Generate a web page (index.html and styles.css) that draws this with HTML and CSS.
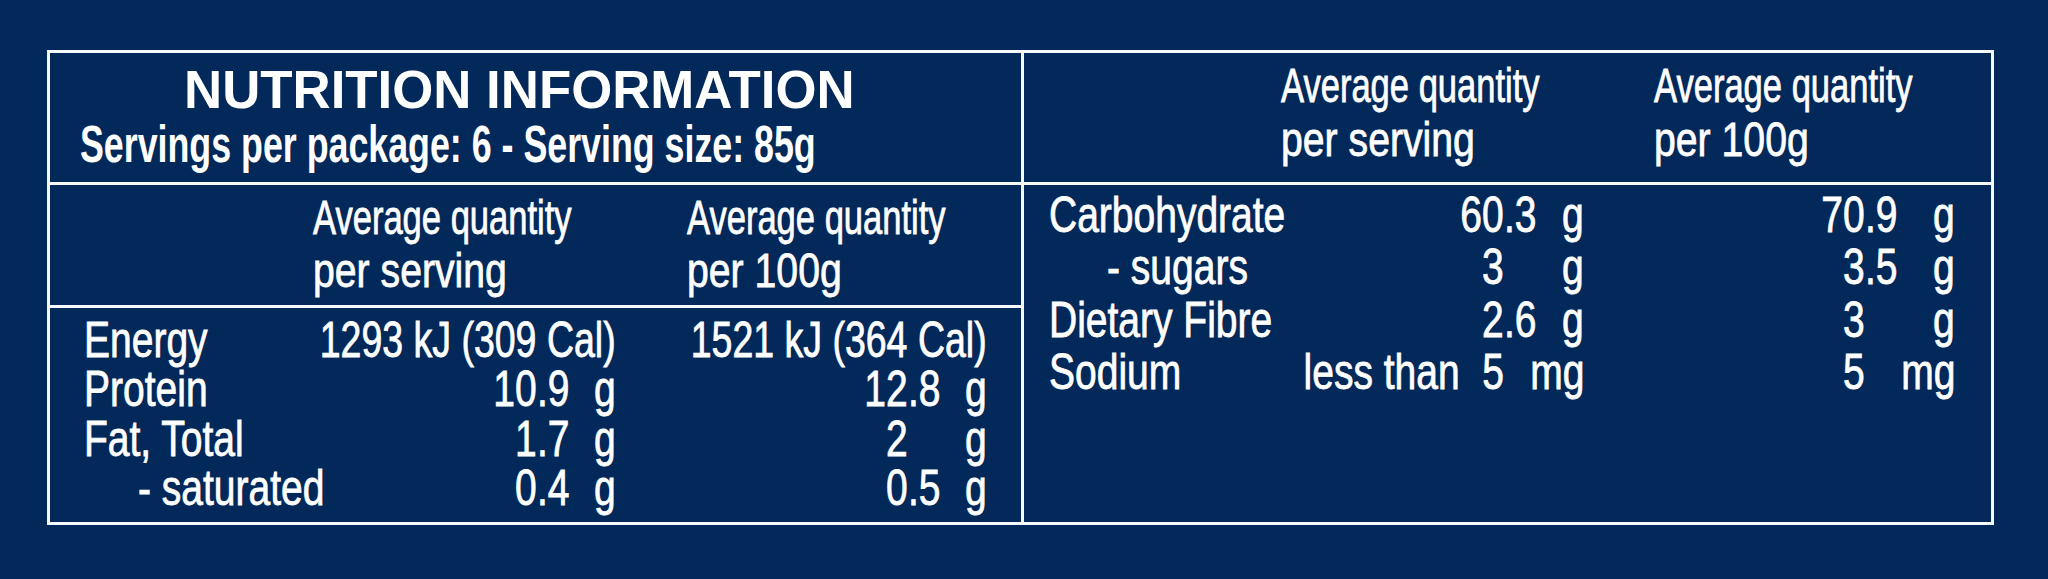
FILE: index.html
```html
<!DOCTYPE html>
<html lang="en">
<head>
<meta charset="utf-8">
<title>Nutrition Information</title>
<link rel="stylesheet" href="styles.css">
</head>
<body>
<div class="panel">
  <section class="half half-left">
    <header class="title">
      <h1 class="heading">NUTRITION INFORMATION</h1>
      <p class="servings"><span class="sx sv">Servings per package: 6 - Serving size: 85g</span></p>
    </header>
    <div class="colhead colhead-left">
      <div class="ch">
        <div><span class="sx aq">Average quantity</span></div>
        <div><span class="sx ps">per serving</span></div>
      </div>
      <div class="ch">
        <div><span class="sx aq">Average quantity</span></div>
        <div><span class="sx ps">per 100g</span></div>
      </div>
    </div>
    <div class="rows rows-left">
      <div class="row row-l">
        <div class="lab"><span class="sx">Energy</span></div>
        <div class="end ev1"><span class="sx ev">1293 kJ (309 Cal)</span></div>
        <div class="end ev2"><span class="sx ev">1521 kJ (364 Cal)</span></div>
      </div>
      <div class="row row-l">
        <div class="lab"><span class="sx">Protein</span></div>
        <div class="end"><span class="sx">10</span></div><div class="frac"><span class="sx">.9</span></div><div class="end"><span class="sx">g</span></div>
        <div class="end"><span class="sx">12</span></div><div class="frac"><span class="sx">.8</span></div><div class="end"><span class="sx">g</span></div>
      </div>
      <div class="row row-l">
        <div class="lab"><span class="sx">Fat, Total</span></div>
        <div class="end"><span class="sx">1</span></div><div class="frac"><span class="sx">.7</span></div><div class="end"><span class="sx">g</span></div>
        <div class="end"><span class="sx">2</span></div><div class="frac"></div><div class="end"><span class="sx">g</span></div>
      </div>
      <div class="row row-l">
        <div class="lab sub-l"><span class="sx">- saturated</span></div>
        <div class="end"><span class="sx">0</span></div><div class="frac"><span class="sx">.4</span></div><div class="end"><span class="sx">g</span></div>
        <div class="end"><span class="sx">0</span></div><div class="frac"><span class="sx">.5</span></div><div class="end"><span class="sx">g</span></div>
      </div>
    </div>
  </section>
  <section class="half half-right">
    <div class="colhead colhead-right">
      <div class="ch">
        <div><span class="sx aq">Average quantity</span></div>
        <div><span class="sx ps">per serving</span></div>
      </div>
      <div class="ch">
        <div><span class="sx aq">Average quantity</span></div>
        <div><span class="sx ps">per 100g</span></div>
      </div>
    </div>
    <div class="rows rows-right">
      <div class="row row-r">
        <div class="lab"><span class="sx">Carbohydrate</span></div>
        <div class="end"><span class="sx">60</span></div><div class="frac"><span class="sx">.3</span></div><div class="end"><span class="sx">g</span></div>
        <div class="end"><span class="sx">70</span></div><div class="frac"><span class="sx">.9</span></div><div class="end"><span class="sx">g</span></div>
      </div>
      <div class="row row-r">
        <div class="lab sub-r"><span class="sx">- sugars</span></div>
        <div class="end"><span class="sx">3</span></div><div class="frac"></div><div class="end"><span class="sx">g</span></div>
        <div class="end"><span class="sx">3</span></div><div class="frac"><span class="sx">.5</span></div><div class="end"><span class="sx">g</span></div>
      </div>
      <div class="row row-r">
        <div class="lab"><span class="sx">Dietary Fibre</span></div>
        <div class="end"><span class="sx">2</span></div><div class="frac"><span class="sx">.6</span></div><div class="end"><span class="sx">g</span></div>
        <div class="end"><span class="sx">3</span></div><div class="frac"></div><div class="end"><span class="sx">g</span></div>
      </div>
      <div class="row row-r">
        <div class="lab"><span class="sx">Sodium</span></div>
        <div class="end"><span class="sx"><span class="lt">less than</span>5</span></div><div class="frac"></div><div class="end"><span class="sx">mg</span></div>
        <div class="end"><span class="sx">5</span></div><div class="frac"></div><div class="end"><span class="sx">mg</span></div>
      </div>
    </div>
  </section>
</div>
</body>
</html>
```
FILE: styles.css
```css
html, body {
  margin: 0;
  padding: 0;
  background: #03295a;
}
body {
  width: 2048px;
  height: 579px;
  overflow: hidden;
  color: #ffffff;
  font-family: "Liberation Sans", Arial, sans-serif;
  font-size: 50px;
}
.panel {
  margin: 50px 0 0 47px;
  width: 1941px;
  height: 469px;
  border: 3px solid #f7f8fa;
  display: grid;
  grid-template-columns: 971px 967px;
  column-gap: 3px;
  background: #f7f8fa;
}
.half {
  display: flex;
  flex-direction: column;
  min-width: 0;
  background: #03295a;
}
.sx {
  display: inline-block;
  white-space: nowrap;
  transform: scaleX(0.78);
  transform-origin: 0 50%;
  -webkit-text-stroke: 0.8px #ffffff;
}
.end {
  display: flex;
  justify-content: flex-end;
  white-space: nowrap;
}
.end .sx {
  transform-origin: 100% 50%;
}
.frac {
  white-space: nowrap;
}

/* title block */
.title {
  box-sizing: border-box;
  height: 132px;
  padding-top: 8.5px;
  border-bottom: 3px solid #f7f8fa;
}
.heading {
  margin: 0;
  padding-left: 134px;
  font-size: 52.8px;
  font-weight: 700;
  line-height: 55px;
  white-space: nowrap;
}
.servings {
  margin: 0;
  padding-left: 30px;
  font-size: 52px;
  font-weight: 700;
  line-height: 55px;
}
.sv {
  transform: scaleX(0.688);
  -webkit-text-stroke: 0;
}

/* column headings */
.colhead {
  box-sizing: border-box;
  display: grid;
  font-size: 49px;
  border-bottom: 3px solid #f7f8fa;
}
.colhead-left {
  height: 123px;
  padding: 6.3px 0 0 263px;
  grid-template-columns: 374px 1fr;
  line-height: 52.5px;
}
.colhead-right {
  height: 132px;
  padding: 5px 0 0 257px;
  grid-template-columns: 373px 1fr;
  line-height: 54px;
}
.aq {
  transform: scaleX(0.705);
}
.ps {
  transform: scaleX(0.80);
}

/* data rows */
.rows-left {
  padding: 7.6px 0 0 34px;
}
.rows-right {
  padding: 3.5px 0 0 25px;
}
.row {
  display: grid;
}
.row-l {
  grid-template-columns: 336px 117px 38px 41px 292px 38px 41px;
  height: 49.6px;
  line-height: 49.6px;
}
.row-r {
  grid-template-columns: 241px 214px 38px 42px 281px 38px 52px;
  height: 52.6px;
  line-height: 52.6px;
}
.ev1 {
  grid-column: 2 / 5;
}
.ev2 {
  grid-column: 5 / 8;
}
.ev {
  transform: scaleX(0.75);
}
.sub-l {
  padding-left: 54px;
}
.sub-r {
  padding-left: 58px;
}
.lt {
  margin-right: 29px;
}
```
